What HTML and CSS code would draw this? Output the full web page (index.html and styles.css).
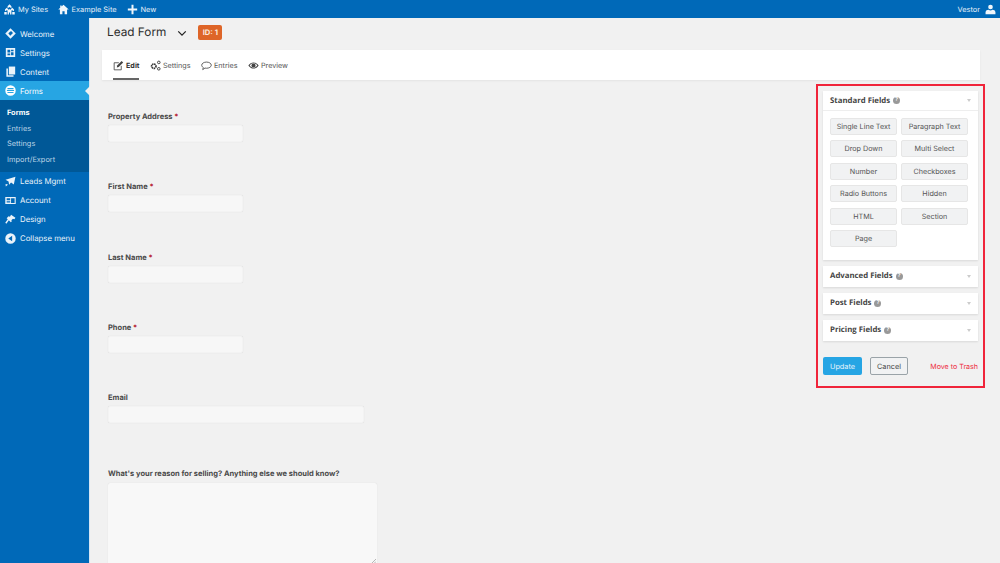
FILE: index.html
```html
<!DOCTYPE html>
<html lang="en">
<head>
<meta charset="utf-8">
<title>Lead Form</title>
<link rel="stylesheet" href="styles.css">
</head>
<body>
<header class="adminbar">
  <a class="bar-item sites"><svg class="bar-icon wide" viewBox="0 0 20 20"><path d="M10 0.500l3.500 3.500v3.500L10 5.500 6.500 7.500V4zM5 7l3.200 3.200V13L5 11.500 1.800 13v-2.800zM15 7l3.200 3.200V13L15 11.500 11.800 13v-2.800zM10 9l3.500 3.500V19h-2.500v-3.500H9V19H6.500v-6.500zM.5 14.500h4.500V19H.5zM15 14.500h4.500V19H15z"/></svg>My Sites</a>
  <a class="bar-item home"><svg class="bar-icon" viewBox="0 0 20 20"><path d="M10 1.500l9.500 8.500h-3v8.500h-4.500v-5.500H8v5.500H3.500V10h-3l3.500-3.100V2.500h2.500V4.700z"/></svg>Example Site</a>
  <a class="bar-item new"><svg class="bar-icon" viewBox="0 0 20 20"><path d="M8.200 1.500h3.600v6.700h6.700v3.600h-6.700v6.700H8.200v-6.700H1.500V8.200h6.700z"/></svg>New</a>
  <a class="bar-item bar-user">Vestor<svg class="bar-icon user-icon" viewBox="0 0 20 20"><circle cx="10" cy="5.500" r="4.200"/><path d="M1 18.500V15c0-3 3-4.500 5.500-4.500 1 1 2.300 1.500 3.500 1.500s2.500-.5 3.500-1.500c2.500 0 5.500 1.500 5.500 4.500v3.500z"/></svg></a>
</header>
<div class="shell">
  <nav class="sidemenu">
    <a class="menu-item first"><svg class="menu-icon" viewBox="0 0 20 20"><path d="M10 .5l9.500 9.500-9.500 9.500L.5 10z"/><path class="cut" d="M6 9.500l5-4 3.500 3.500-5 5z"/></svg>Welcome</a>
    <a class="menu-item"><svg class="menu-icon" viewBox="0 0 20 20"><path fill-rule="evenodd" d="M1.500 2h17v16h-17zM4.500 5v5h5V5zM11 5v2.500h4.500V5zM11 9.500V15h4.500V9.500zM4.500 12v3h5v-3z"/></svg>Settings</a>
    <a class="menu-item"><svg class="menu-icon" viewBox="0 0 20 20"><path d="M7 1h11.500v14.500H7z"/><path d="M2.500 4.500h2.800v12.200H15.500V19.500H2.500z"/></svg>Content</a>
    <a class="menu-item current"><svg class="menu-icon" viewBox="0 0 20 20"><path fill-rule="evenodd" d="M10 .5a9.500 9.500 0 1 1 0 19 9.500 9.500 0 0 1 0-19zM4.500 5.500v2h11v-2zM3.500 9v2h13V9zM4.500 12.500v2h11v-2z"/></svg>Forms</a>
    <div class="submenu">
      <a class="sub-item active">Forms</a>
      <a class="sub-item">Entries</a>
      <a class="sub-item">Settings</a>
      <a class="sub-item">Import/Export</a>
    </div>
    <a class="menu-item"><svg class="menu-icon" viewBox="0 0 20 20"><path d="M1 7l18-5.500-3 14-5-3.500-3.500 4L6.500 10z"/><path d="M1 14.500l4.500 1L1.500 19z"/></svg>Leads Mgmt</a>
    <a class="menu-item"><svg class="menu-icon" viewBox="0 0 20 20"><path fill-rule="evenodd" d="M.5 3.500h19v13H.5zM3 6v3.500h6.500V6zM3 11v1.200h6.500V11zM3 13.500v1.200h6.500v-1.200zM11 6v8.700h6.500V6z"/></svg>Account</a>
    <a class="menu-item"><svg class="menu-icon" viewBox="0 0 20 20"><path d="M11 1.500l8 5.500-2 2.500-2.500-1-3 3 1 1.500-2 2-3.500-3.500-4.500 6-2-1.500 4.500-6.500-2-2 3.500-3.500 2.500 1z"/></svg>Design</a>
    <a class="menu-item collapse"><svg class="menu-icon" viewBox="0 0 20 20"><path fill-rule="evenodd" d="M10 .5a9.500 9.500 0 1 1 0 19 9.500 9.500 0 0 1 0-19zM13 5L6 10l7 5z"/></svg>Collapse menu</a>
  </nav>
  <main class="content">
    <div class="title-row">
      <h1 class="title">Lead Form</h1>
      <svg class="caret" viewBox="0 0 12 8"><path d="M1.500 1.500L6 6l4.500-4.500"/></svg>
      <span class="id-badge">ID: 1</span>
    </div>
    <div class="tabs">
      <a class="tab active"><svg class="tab-icon" viewBox="0 0 16 16"><path class="line" d="M12 8.500V14.300H1.700V4h6.800"/><path d="M6 8l6.500-6.500 2.300 2.300L8.300 10.300l-2.800.5z"/></svg>Edit</a>
      <a class="tab"><svg class="tab-icon" viewBox="0 0 16 16"><circle class="ring" cx="5.500" cy="9" r="3.200"/><circle class="ring thin" cx="12.800" cy="3.500" r="1.900"/><circle class="ring thin" cx="12.800" cy="12.800" r="1.900"/></svg>Settings</a>
      <a class="tab"><svg class="tab-icon" viewBox="0 0 16 16"><path class="line" d="M8 3c3.700 0 7 2 7 4.500S11.700 12 8 12c-.8 0-1.500-.1-2.200-.3L2.500 14l.8-3.200C1.800 9.900 1 8.700 1 7.500 1 5 4.300 3 8 3z"/></svg>Entries</a>
      <a class="tab"><svg class="tab-icon" viewBox="0 0 16 16"><path d="M0.500 8C2.500 5 5 3.500 8 3.500S13.500 5 15.500 8c-2 3-4.500 4.500-7.500 4.500S2.500 11 .5 8zM2.500 8c1.500 2 3.300 3.200 5.500 3.200S12 10 13.500 8C12 6 10.200 4.800 8 4.800S4 6 2.500 8z" fill-rule="evenodd"/><circle cx="8" cy="8" r="3"/></svg>Preview</a>
    </div>
    <div class="editor">
      <form class="form">
        <div class="field f1"><label class="label">Property Address <span class="req">*</span></label><div class="input short"></div></div>
        <div class="field f1"><label class="label">First Name <span class="req">*</span></label><div class="input short"></div></div>
        <div class="field f1"><label class="label">Last Name <span class="req">*</span></label><div class="input short"></div></div>
        <div class="field f1"><label class="label">Phone <span class="req">*</span></label><div class="input short"></div></div>
        <div class="field f2"><label class="label">Email</label><div class="input medium"></div></div>
        <div class="field f3"><label class="label">What's your reason for selling? Anything else we should know?</label><div class="textarea"><svg class="grip" viewBox="0 0 6 6"><path d="M0 6l6-6M3 6l3-3"/></svg></div></div>
      </form>
      <aside class="panel">
        <section class="box">
          <div class="box-head"><span class="box-title">Standard Fields</span><span class="help">?</span><span class="arrow"></span></div>
          <div class="box-body">
            <a class="field-btn">Single Line Text</a><a class="field-btn">Paragraph Text</a>
            <a class="field-btn">Drop Down</a><a class="field-btn">Multi Select</a>
            <a class="field-btn">Number</a><a class="field-btn">Checkboxes</a>
            <a class="field-btn">Radio Buttons</a><a class="field-btn">Hidden</a>
            <a class="field-btn">HTML</a><a class="field-btn">Section</a>
            <a class="field-btn">Page</a>
          </div>
        </section>
        <section class="box"><div class="box-head closed"><span class="box-title">Advanced Fields</span><span class="help">?</span><span class="arrow"></span></div></section>
        <section class="box"><div class="box-head closed"><span class="box-title">Post Fields</span><span class="help">?</span><span class="arrow"></span></div></section>
        <section class="box"><div class="box-head closed"><span class="box-title">Pricing Fields</span><span class="help">?</span><span class="arrow"></span></div></section>
        <div class="actions">
          <a class="btn primary">Update</a>
          <a class="btn secondary">Cancel</a>
          <a class="trash">Move to Trash</a>
        </div>
      </aside>
    </div>
  </main>
</div>
</body>
</html>
```
FILE: styles.css
```css
* { box-sizing: border-box; }
html, body { margin: 0; height: 563px; overflow: hidden; }
body {
  background: #f1f1f1;
  font-family: Inter, "Liberation Sans", sans-serif;
  font-size: 8px;
  color: #444;
  text-rendering: geometricPrecision;
}
.adminbar {
  height: 18px;
  background: #0069b8;
  color: #e6f0f8;
  display: flex;
  align-items: center;
  padding-left: 4px;
  font-size: 7.400px;
}
.bar-item { display: flex; align-items: center; gap: 3px; }
.home { margin-left: 9.500px; }
.new { margin-left: 10px; }
.bar-icon { width: 11px; height: 11px; fill: #f0f6fb; flex: none; }
.bar-user { margin-left: auto; margin-right: 4px; gap: 5px; }
.shell { display: flex; height: 545px; }
.sidemenu {
  width: 90px;
  flex: none;
  background: #0069b8;
  border-right: 1px solid #d5e6f4;
  padding-top: 6px;
  color: #eaf3fa;
  font-size: 7.800px;
}
.menu-item {
  height: 19px;
  display: flex;
  align-items: center;
  padding-left: 5px;
  gap: 4px;
  position: relative;
}
.menu-icon { width: 11px; height: 11px; fill: #eaf3fa; flex: none; }
.menu-icon .cut { fill: #0069b8; }
.menu-item.current { background: #27a5e3; color: #fff; }
.menu-item.current .menu-icon { fill: #fff; }
.menu-item.current::after {
  content: "";
  position: absolute;
  right: -1px;
  top: 5px;
  border: 5px solid transparent;
  border-right-color: #f1f1f1;
  border-left-width: 0;
}
.submenu {
  background: #005897;
  padding: 5px 0 4.500px;
  color: #bcd4e6;
  font-size: 7.400px;
}
.sub-item { display: flex; align-items: center; height: 15.600px; padding-left: 7px; }
.sub-item.active { color: #fff; font-weight: 700; }
.content { flex: 1; min-width: 0; padding-left: 12px; padding-right: 20px; }
.title-row { display: flex; align-items: center; height: 28px; padding-left: 5px; }
.title { margin: 0; font-size: 11.800px; font-weight: 400; color: #2e2e2e; }
.caret { width: 10px; height: 7px; margin-left: 11px; margin-top: 3px; fill: none; stroke: #222; stroke-width: 1.500; }
.id-badge {
  margin-left: 11px;
  background: #de6528;
  color: #fbe9dc;
  font-size: 7.600px;
  font-weight: 700;
  border-radius: 2px;
  width: 24px;
  text-align: center;
  height: 15px;
  line-height: 15px;
}
.tabs {
  height: 30px;
  margin-top: 4px;
  background: #fff;
  box-shadow: 0 1px 2px rgba(0,0,0,.06);
  display: flex;
  padding-left: 11px;
  gap: 10.500px;
  font-size: 7.200px;
  color: #555;
}
.tab { display: flex; align-items: center; gap: 2px; height: 30px; padding-top: 1px; white-space: nowrap; }
.tab.active { border-bottom: 2px solid #666; padding-top: 3px; color: #333; font-weight: 700; }
.tab-icon { width: 11px; height: 11px; fill: #444; flex: none; }
.tab-icon .line { fill: none; stroke: #444; stroke-width: 1.200; }
.tab-icon .ring { fill: none; stroke: #333; stroke-width: 2.400; stroke-dasharray: 2 .8; }
.tab-icon .ring.thin { stroke-width: 1.300; stroke-dasharray: none; }
.editor { display: flex; justify-content: space-between; }
.form { padding-left: 6px; padding-top: 32px; }
.label { display: block; height: 10px; line-height: 10px; margin-bottom: 3px; font-weight: 700; font-size: 7.500px; color: #4a4a4a; }
.req { color: #b3132a; }
.f1 { height: 31px; margin-bottom: 39.300px; }
.f2 { height: 31px; margin-bottom: 45px; }
.f3 .label { margin-bottom: 4px; }
.input {
  height: 17px;
  background: #f7f7f7;
  border: 1px solid #f3f3f3;
  border-radius: 2px;
  box-shadow: 0 0 1px rgba(0,0,0,.12);
}
.short { width: 135px; }
.medium { width: 256px; }
.textarea {
  position: relative;
  width: 269px;
  height: 90px;
  background: #f8f8f8;
  border-radius: 2px;
  box-shadow: 0 0 1px rgba(0,0,0,.15);
}
.grip { position: absolute; right: 1px; bottom: 9px; width: 5px; height: 5px; fill: none; stroke: #888; stroke-width: .7; }
.panel {
  width: 169px;
  height: 304px;
  margin-top: 4px;
  margin-right: -5px;
  outline: 2px solid #f0243a;
  outline-offset: -2px;
  padding: 7px 7px 0;
}
.box { background: #fff; box-shadow: 0 1px 2px rgba(0,0,0,.1); margin-bottom: 6px; }
.box-head {
  height: 20px;
  display: flex;
  align-items: center;
  padding: 0 7px;
  gap: 3px;
  border-bottom: 1px solid #eee;
}
.box-head.closed { height: 21px; border-bottom: 0; }
.box-title { font-family: "Open Sans", sans-serif; font-weight: 700; font-size: 7.800px; color: #444; }
.help {
  width: 7px; height: 7px; border-radius: 50%;
  background: #999; color: #fff;
  font-size: 5.500px; font-weight: 700;
  line-height: 7px; text-align: center;
}
.arrow {
  margin-left: auto;
  border-top: 3px solid #ccc;
  border-left: 2.500px solid transparent;
  border-right: 2.500px solid transparent;
}
.box-body {
  display: grid;
  grid-template-columns: 67px 67px;
  grid-auto-rows: 17px;
  gap: 5.400px 4px;
  padding: 7px 7px 12px;
  height: 148.500px;
}
.field-btn {
  background: #f1f2f3;
  border: 1px solid #e6e6e6;
  border-radius: 2px;
  display: flex;
  align-items: center;
  justify-content: center;
  font-size: 7.200px;
  color: #555;
  white-space: nowrap;
}
.actions { display: flex; align-items: center; margin-top: 16.500px; font-size: 7.300px; }
.btn { height: 18px; display: flex; align-items: center; justify-content: center; border-radius: 2px; }
.primary { width: 39px; background: #26a5e4; color: #e8f5fc; }
.secondary { width: 38px; margin-left: 8px; background: #f1f2f3; border: 1px solid #9aa3a8; color: #444; }
.trash { margin-left: auto; color: #ee2f3f; font-size: 7.100px; }
```
